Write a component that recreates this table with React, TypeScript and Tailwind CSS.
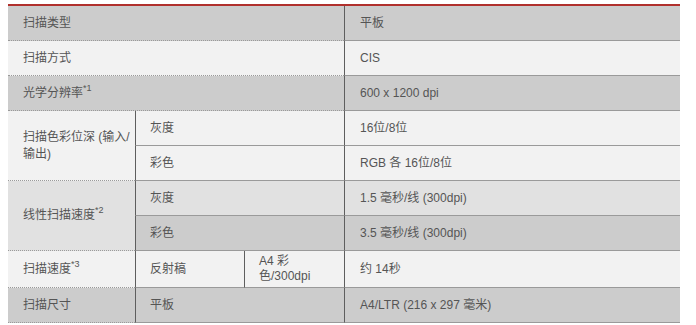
import React from "react"

const line = "border-b border-dotted border-b-[#9a9a9a]"
const vline = "border-l border-solid border-l-[#5e5e5e]"

const Sup = ({ n }: { n: string }) => (
  <sup className="relative top-[-1px] align-top text-[9px] leading-none">*{n}</sup>
)

const App: React.FC = () => {
  return (
    <div
      className="h-[325px] w-[696px] bg-white pt-[4px] text-[12px] text-[#555555]"
      style={{ fontFamily: '"Liberation Sans", "Noto Sans CJK SC", sans-serif' }}
    >
      <table className="ml-[8px] w-[672px] table-fixed border-separate border-spacing-0 border-t-2 border-t-[#b0302c] leading-[17px]">
        <colgroup>
          <col className="w-[127px]" />
          <col className="w-[109px]" />
          <col className="w-[100px]" />
          <col className="w-[336px]" />
        </colgroup>
        <tbody>
          <tr className="bg-[#cccccc]">
            <td colSpan={3} className={`h-[35px] pl-[15px] ${line}`}>扫描类型</td>
            <td className={`pl-[15px] ${vline} ${line}`}>平板</td>
          </tr>
          <tr className="bg-[#f2f2f2]">
            <td colSpan={3} className={`h-[35px] pl-[15px] ${line}`}>扫描方式</td>
            <td className={`pl-[15px] ${vline} ${line}`}>CIS</td>
          </tr>
          <tr className="bg-[#cccccc]">
            <td colSpan={3} className={`h-[35px] pl-[15px] ${line}`}>
              光学分辨率<Sup n="1" />
            </td>
            <td className={`pl-[15px] ${vline} ${line}`}>600 x 1200 dpi</td>
          </tr>
          <tr className="bg-[#f2f2f2]">
            <td rowSpan={2} className={`pl-[15px] pr-[2px] ${line}`}>扫描色彩位深 (输入/输出)</td>
            <td colSpan={2} className={`h-[35px] pl-[14px] ${vline} ${line}`}>灰度</td>
            <td className={`pl-[15px] ${vline} ${line}`}>16位/8位</td>
          </tr>
          <tr className="bg-[#f2f2f2]">
            <td colSpan={2} className={`h-[35px] pl-[14px] ${vline} ${line}`}>彩色</td>
            <td className={`pl-[15px] ${vline} ${line}`}>RGB 各 16位/8位</td>
          </tr>
          <tr className="bg-[#e1e1e1]">
            <td rowSpan={2} className={`pl-[15px] ${line}`}>
              线性扫描速度<Sup n="2" />
            </td>
            <td colSpan={2} className={`h-[35px] pl-[14px] ${vline} ${line}`}>灰度</td>
            <td className={`pl-[15px] ${vline} ${line}`}>1.5 毫秒/线 (300dpi)</td>
          </tr>
          <tr className="bg-[#cccccc]">
            <td colSpan={2} className={`h-[35px] pl-[14px] ${vline} ${line}`}>彩色</td>
            <td className={`pl-[15px] ${vline} ${line}`}>3.5 毫秒/线 (300dpi)</td>
          </tr>
          <tr className="bg-[#f2f2f2]">
            <td className={`h-[37px] pl-[15px] ${line}`}>
              扫描速度<Sup n="3" />
            </td>
            <td className={`pl-[14px] ${vline} ${line}`}>反射稿</td>
            <td className={`pl-[14px] pr-[20px] leading-[15px] ${vline} ${line}`}>A4 彩色/300dpi</td>
            <td className={`pl-[15px] ${vline} ${line}`}>约 14秒</td>
          </tr>
          <tr className="bg-[#cccccc]">
            <td className={`h-[35px] pl-[15px] ${line}`}>扫描尺寸</td>
            <td colSpan={2} className={`pl-[14px] ${vline} ${line}`}>平板</td>
            <td className={`pl-[15px] ${vline} ${line}`}>A4/LTR (216 x 297 毫米)</td>
          </tr>
        </tbody>
      </table>
    </div>
  )
}

export default App
